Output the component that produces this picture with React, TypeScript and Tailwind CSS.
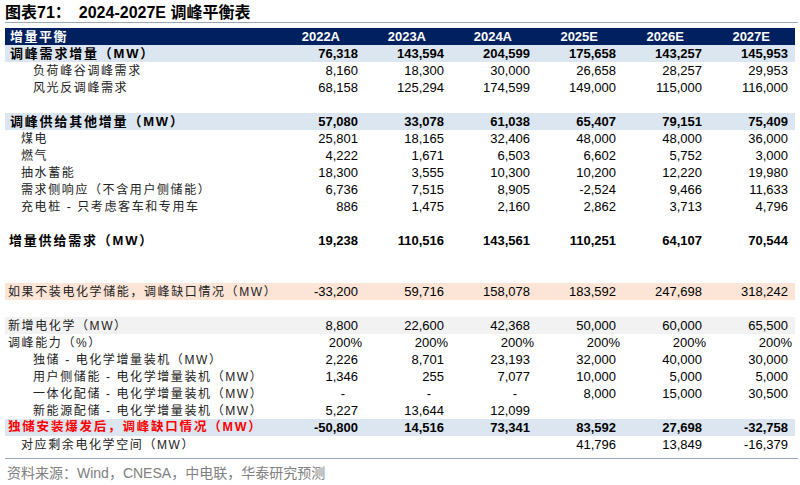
import React from "react";

type Row = {
  label?: string;
  indent?: number;
  bold?: boolean;
  red?: boolean;
  bg?: string;
  pct?: boolean;
  values?: string[];
};

const rows: Row[] = [
  { label: "调峰需求增量（MW）", indent: 5, bold: true, bg: "bg-[#dce6f1]", values: ["76,318", "143,594", "204,599", "175,658", "143,257", "145,953"] },
  { label: "负荷峰谷调峰需求", indent: 28, values: ["8,160", "18,300", "30,000", "26,658", "28,257", "29,953"] },
  { label: "风光反调峰需求", indent: 28, values: ["68,158", "125,294", "174,599", "149,000", "115,000", "116,000"] },
  {},
  { label: "调峰供给其他增量（MW）", indent: 5, bold: true, bg: "bg-[#dce6f1]", values: ["57,080", "33,078", "61,038", "65,407", "79,151", "75,409"] },
  { label: "煤电", indent: 16, values: ["25,801", "18,165", "32,406", "48,000", "48,000", "36,000"] },
  { label: "燃气", indent: 16, values: ["4,222", "1,671", "6,503", "6,602", "5,752", "3,000"] },
  { label: "抽水蓄能", indent: 16, values: ["18,300", "3,555", "10,300", "10,200", "12,220", "19,980"] },
  { label: "需求侧响应（不含用户侧储能）", indent: 16, values: ["6,736", "7,515", "8,905", "-2,524", "9,466", "11,633"] },
  { label: "充电桩 - 只考虑客车和专用车", indent: 16, values: ["886", "1,475", "2,160", "2,862", "3,713", "4,796"] },
  {},
  { label: "增量供给需求（MW）", indent: 4, bold: true, values: ["19,238", "110,516", "143,561", "110,251", "64,107", "70,544"] },
  {},
  {},
  { label: "如果不装电化学储能，调峰缺口情况（MW）", indent: 3, bg: "bg-[#fce4d6]", values: ["-33,200", "59,716", "158,078", "183,592", "247,698", "318,242"] },
  {},
  { label: "新增电化学（MW）", indent: 3, bg: "bg-[#f2f2f2]", values: ["8,800", "22,600", "42,368", "50,000", "60,000", "65,500"] },
  { label: "调峰能力（%）", indent: 3, pct: true, values: ["200%", "200%", "200%", "200%", "200%", "200%"] },
  { label: "独储 - 电化学增量装机（MW）", indent: 28, values: ["2,226", "8,701", "23,193", "32,000", "40,000", "30,000"] },
  { label: "用户侧储能 - 电化学增量装机（MW）", indent: 28, values: ["1,346", "255", "7,077", "10,000", "5,000", "5,000"] },
  { label: "一体化配储 - 电化学增量装机（MW）", indent: 28, values: ["-", "-", "-", "8,000", "15,000", "30,500"] },
  { label: "新能源配储 - 电化学增量装机（MW）", indent: 28, values: ["5,227", "13,644", "12,099", "", "", ""] },
  { label: "独储安装爆发后，调峰缺口情况（MW）", indent: 3, bold: true, red: true, bg: "bg-[#dce6f1]", values: ["-50,800", "14,516", "73,341", "83,592", "27,698", "-32,758"] },
  { label: "对应剩余电化学空间（MW）", indent: 16, values: ["", "", "", "41,796", "13,849", "-16,379"] },
];

const years = ["2022A", "2023A", "2024A", "2025E", "2026E", "2027E"];

function Cell({ v, pct, bold }: { v: string; pct?: boolean; bold?: boolean }) {
  if (v === "-") {
    return <div className="w-[86px] text-right pr-[15px]">-</div>;
  }
  return (
    <div className={`w-[86px] text-right pr-[2px] ${bold ? "font-bold" : ""}`}>
      {pct ? <span className="inline-block translate-x-[4px]">{v}</span> : v}
    </div>
  );
}

export default function App() {
  return (
    <div
      className="w-[800px] h-[485px] bg-white text-black overflow-hidden"
      style={{ fontFamily: "'Liberation Sans', Arial, 'Noto Sans CJK SC', sans-serif" }}
    >
      <div className="h-[22px] pl-[5px] pt-[3px] flex items-center text-[16px] font-bold leading-none">
        <span>图表71：</span>
        <span className="ml-[8px]">2024-2027E 调峰平衡表</span>
      </div>
      <div className="ml-[5px] w-[793px] h-px bg-[#9aa9bf]" />
      <div className="ml-[5px] mt-[5px] w-[790px]">
        <div className="flex h-[17px] items-center bg-[#002060] text-white text-[13px] font-bold leading-none">
          <div className="w-[269px] pl-[5px] tracking-[1.5px]">增量平衡</div>
          {years.map((y) => (
            <div key={y} className="w-[86px] text-right pr-[20px]">
              {y}
            </div>
          ))}
        </div>
        {rows.map((r, i) => (
          <div key={i} className={`flex h-[17px] items-center text-[13px] leading-none ${r.bg ?? ""}`}>
            <div
              className={`w-[269px] whitespace-nowrap ${r.bold ? "font-bold tracking-[1.8px]" : "text-[12px] tracking-[1.6px] text-[#222]"} ${r.red ? "text-[#ff0000] text-[12.5px]" : ""}`}
              style={{ paddingLeft: r.indent ?? 0 }}
            >
              {r.label ?? ""}
            </div>
            {r.values?.map((v, j) => (
              <Cell key={j} v={v} pct={r.pct} bold={r.bold} />
            ))}
          </div>
        ))}
      </div>
      <div className="ml-[5px] mt-[5px] w-[793px] h-px bg-[#9aa9bf]" />
      <div className="pl-[7px] mt-[6px] text-[14px] leading-[16px] text-[#808080]">
        资料来源：Wind，CNESA，中电联，华泰研究预测
      </div>
    </div>
  );
}
